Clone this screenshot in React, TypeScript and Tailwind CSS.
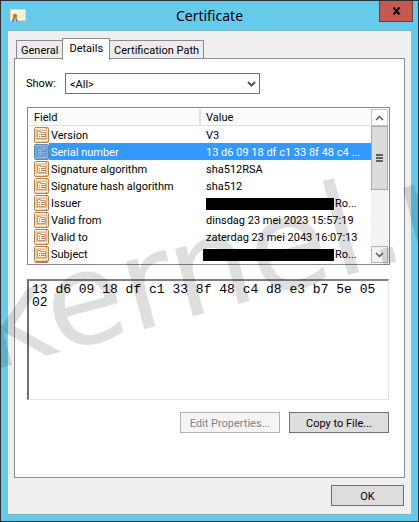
import { useState } from "react";
import clsx from "clsx";

const tabs = ["General", "Details", "Certification Path"];

type FieldRow = {
  field: string;
  value: string;
  redacted?: string;
};

const rows: FieldRow[] = [
  { field: "Version", value: "V3" },
  { field: "Serial number", value: "13 d6 09 18 df c1 33 8f 48 c4 ..." },
  { field: "Signature algorithm", value: "sha512RSA" },
  { field: "Signature hash algorithm", value: "sha512" },
  { field: "Issuer", value: "Ro...", redacted: "w-32" },
  { field: "Valid from", value: "dinsdag 23 mei 2023 15:57:19" },
  { field: "Valid to", value: "zaterdag 23 mei 2043 16:07:13" },
  { field: "Subject", value: "Ro...", redacted: "-ml-[3px] w-[131px]" },
];

const serial = "13 d6 09 18 df c1 33 8f 48 c4 d8 e3 b7 5e 05 02";

const CertificateIcon = () => (
  <svg viewBox="0 0 16 14" className="h-3.5 w-4" aria-hidden="true">
    <rect x="0.5" y="0.5" width="15" height="11" fill="#f8f6f2" stroke="#ecd2a6" />
    <path d="M8 3.5h2M11 3.5h3M10 6.5h4M8 8.5h6" stroke="#e3e3e3" />
    <path d="M3 8l-1 5 2-1 1-3zM6 8l2 5-2-1-1-3z" fill="#3f74c9" />
    <circle cx="5" cy="7" r="2.5" fill="#d79a12" />
    <circle cx="5" cy="7" r="1" fill="#a86c08" />
  </svg>
);

const FieldIcon = ({ selected }: { selected?: boolean }) => {
  const dark = selected ? "#5f87ad" : "#b9814f";
  const light = selected ? "#8dbdec" : "#fff3e4";
  const mid = selected ? "#76a9dc" : "#f7d3ad";
  return (
    <svg viewBox="0 0 15 16" className="block h-4 w-[15px]" aria-hidden="true">
      <rect x="0.5" y="0.5" width="14" height="15" rx="1" fill={mid} stroke={dark} />
      <path d="M1 1.5h13M1 13.5h13" stroke={light} />
      <path d="M2.5 3.5h10v9h-10z" fill={light} stroke={dark} strokeOpacity="0.35" />
      <path d="M3.5 11.5v-7h3v1h5v6z" fill={light} stroke={dark} strokeOpacity="0.8" />
      <path d="M5 7.5h1M7 7.5h4M5 9.5h1M7 9.5h4" stroke={dark} />
      <path d="M12 1.5h1M12 14.5h1" stroke={dark} />
    </svg>
  );
};

const Chevron = ({ up, bold }: { up?: boolean; bold?: boolean }) => (
  <svg viewBox="0 0 9 6" className="h-1.5 w-[9px]" fill="none" aria-hidden="true">
    <path
      d={up ? "M1 5l3.5-3.5L8 5" : "M1 1l3.5 3.5L8 1"}
      stroke="#555"
      strokeWidth={bold ? 2 : 1.4}
    />
  </svg>
);

const ScrollBar = () => (
  <div className="flex w-[17px] shrink-0 flex-col bg-[#f3f3f3]">
    <button
      aria-label="Scroll up"
      className="flex h-[17px] items-center justify-center border border-[#c4c4c4] bg-white"
    >
      <Chevron up />
    </button>
    <div className="flex h-16 flex-col items-center justify-center gap-px border border-[#a9a9a9] bg-[#dcdcdc]">
      <span className="h-0.5 w-[7px] bg-[#606060]" />
      <span className="h-0.5 w-[7px] bg-[#606060]" />
      <span className="h-0.5 w-[7px] bg-[#606060]" />
    </div>
    <div className="grow" />
    <button
      aria-label="Scroll down"
      className="flex h-[17px] items-center justify-center border border-[#b5b5b5] bg-[#f3f3f3]"
    >
      <Chevron />
    </button>
  </div>
);

const FieldList = () => {
  const [selected, setSelected] = useState(1);
  return (
    <div className="mt-[13px] flex h-[158px] border border-[#828790] bg-white p-px">
      <div className="min-w-0 grow overflow-hidden">
        <table className="w-full table-fixed border-separate border-spacing-0 text-left leading-[14px]">
          <thead>
            <tr className="h-[17px]">
              <th className="w-[172px] border-r-2 border-b border-[#e0e0e0] bg-[#fcfcfc] p-0 pt-0.5 pl-[5px] font-normal">
                Field
              </th>
              <th className="border-b border-[#e0e0e0] bg-[#fcfcfc] p-0 pt-0.5 pl-[5px] font-normal">
                Value
              </th>
            </tr>
          </thead>
          <tbody>
            {rows.map((row, i) => (
              <tr key={row.field} className="h-[17px]" onClick={() => setSelected(i)}>
                <td className="p-0 pl-[5px]">
                  <div className="flex h-[17px] items-center">
                    <FieldIcon selected={selected === i} />
                    <span
                      className={clsx(
                        "h-[17px] grow pt-0.5 pl-0.5 leading-[15px] whitespace-nowrap",
                        selected === i && "bg-[#3399ff] text-white"
                      )}
                    >
                      {row.field}
                    </span>
                  </div>
                </td>
                <td className={clsx("p-0 pl-[5px]", selected === i && "bg-[#3399ff] text-white")}>
                  <div className="flex h-[17px] items-center pt-0.5 leading-[15px] whitespace-nowrap">
                    {row.redacted && (
                      <span className={clsx("mr-px h-3 bg-black", row.redacted)} />
                    )}
                    {row.value}
                  </div>
                </td>
              </tr>
            ))}
            <tr>
              <td className="p-0 pl-[5px]">
                <FieldIcon />
              </td>
              <td />
            </tr>
          </tbody>
        </table>
      </div>
      <ScrollBar />
    </div>
  );
};

const App = () => {
  const [active, setActive] = useState("Details");
  return (
    <div className="relative flex flex-col overflow-hidden border border-[#2b3035] bg-[#66cbea] px-[7px] pb-1.5 font-['Roboto',sans-serif] text-[11px] text-black">
      <header className="grid h-[29px] grid-cols-[1fr_auto_1fr]">
        <div className="flex items-center pl-0.5">
          <CertificateIcon />
        </div>
        <h1 className="self-center font-['Noto_Sans',sans-serif] text-[14px] leading-5">
          Certificate
        </h1>
        <button
          aria-label="Close"
          className="-mr-0.5 flex h-[21px] w-[34px] items-center justify-center justify-self-end border border-t-0 border-[#6b3a3a] bg-[#c4594f]"
        >
          <svg viewBox="0 0 9 8" className="h-2 w-[9px]" aria-hidden="true">
            <path d="M1.5 0.5l6 7M7.5 0.5l-6 7" stroke="#000" strokeWidth="2" />
          </svg>
        </button>
      </header>

      <main className="border-y border-[#7bb3c8] bg-[#efefef] px-1.5 pb-2">
        <div role="tablist" className="flex items-end pt-[7px] pl-0.5">
          {tabs.map((tab) => (
            <button
              key={tab}
              role="tab"
              aria-selected={active === tab}
              onClick={() => setActive(tab)}
              className={clsx(
                "border border-b-0 border-[#898c95] leading-4 whitespace-nowrap",
                active === tab
                  ? "relative z-10 -mx-px -mb-0.5 h-[22px] bg-white px-1.5 pb-0.5"
                  : "h-[18px] bg-[#ececec] px-1 pt-0.5"
              )}
            >
              {tab}
            </button>
          ))}
        </div>

        <section className="border border-[#898c95] bg-white pt-3.5 pr-3.5 pb-11 pl-3">
          <div className="flex items-center">
            <label htmlFor="show" className="-ml-px w-[39px] pt-0.5">
              Show:
            </label>
            <div className="relative w-[195px]">
              <select
                id="show"
                className="block h-[21px] w-full appearance-none border border-[#707070] bg-white pt-0.5 pl-1 leading-4"
              >
                <option>{"<All>"}</option>
              </select>
              <span className="pointer-events-none absolute top-2 right-1">
                <Chevron bold />
              </span>
            </div>
          </div>

          <FieldList />

          <div className="mt-3.5 mr-px">
            <textarea
              readOnly
              aria-label="Field value"
              defaultValue={serial}
              className="block h-[121px] w-full resize-none border-t-2 border-r border-b border-l-2 border-t-[#808080] border-r-[#e3e3e3] border-b-[#e3e3e3] border-l-[#707070] bg-white px-[3px] py-0.5 font-['Liberation_Mono',monospace] text-[13px] leading-[13px] outline-none"
            />

            <div className="mt-3 flex justify-end gap-[9px]">
              <button
                disabled
                className="h-[21px] w-[100px] border border-[#adb2b5] bg-[#f4f4f4] pt-0.5 leading-4 text-[#838383]"
              >
                Edit Properties...
              </button>
              <button className="h-[21px] w-[100px] border border-[#707070] bg-[#dddddd] pt-0.5 leading-4">
                Copy to File...
              </button>
            </div>
          </div>
        </section>

        <div className="mt-[7px] mr-px flex justify-end">
          <button className="h-[21px] w-[73px] border border-[#707070] bg-[#dddddd] pt-0.5 leading-4">
            OK
          </button>
        </div>
      </main>

      {/* watermark */}
      <div
        aria-hidden="true"
        className="pointer-events-none absolute bottom-[131px] -left-1.5 z-20 origin-bottom-left -rotate-[15deg] font-['DejaVu_Sans',sans-serif] text-[128px] leading-none whitespace-nowrap text-black/13 select-none"
      >
        kernel.n
      </div>
    </div>
  );
};

export default App;
